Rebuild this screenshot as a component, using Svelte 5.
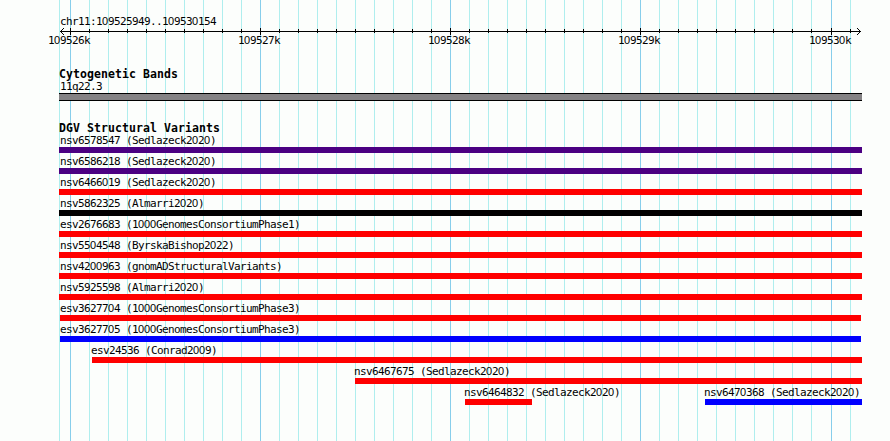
<script>
  const gridX = [59];
  for (let i = 0; i < 42; i++) gridX.push(70 + i * 19 + (i >= 40 ? 1 : 0));
  const majors = [70, 260, 450, 640, 831];
  const ticks = gridX.slice(1);

  const scale = [
    { x: 48, text: '109526k' },
    { x: 238, text: '109527k' },
    { x: 428, text: '109528k' },
    { x: 618, text: '109529k' },
    { x: 809, text: '109530k' }
  ];

  const purple = '#4b0082';
  const red = '#ff0000';
  const blue = '#0000ff';
  const full = (name, color, start = 59, end = 862) => [{ name, color, start, end, label: 60 }];

  const rows = [
    full('nsv6578547 (Sedlazeck2020)', purple),
    full('nsv6586218 (Sedlazeck2020)', purple),
    full('nsv6466019 (Sedlazeck2020)', red),
    full('nsv5862325 (Almarri2020)', '#000000'),
    full('esv2676683 (1000GenomesConsortiumPhase1)', red),
    full('nsv5504548 (ByrskaBishop2022)', red),
    full('nsv4200963 (gnomADStructuralVariants)', red),
    full('nsv5925598 (Almarri2020)', red),
    full('esv3627704 (1000GenomesConsortiumPhase3)', red, 60, 861),
    full('esv3627705 (1000GenomesConsortiumPhase3)', blue, 60, 861),
    [{ name: 'esv24536 (Conrad2009)', color: red, start: 92, end: 862, label: 91 }],
    [{ name: 'nsv6467675 (Sedlazeck2020)', color: red, start: 355, end: 862, label: 354 }],
    [
      { name: 'nsv6464832 (Sedlazeck2020)', color: red, start: 465, end: 532, label: 464 },
      { name: 'nsv6470368 (Sedlazeck2020)', color: blue, start: 705, end: 862, label: 704 }
    ]
  ];

  const gap = (row, i) => row[i].start - (i ? row[i - 1].end : 0);
  // Zeros are set apart so they can use an undotted face.
  const parts = (s) => s.split(/(0+)/).filter(Boolean);
</script>

{#snippet mono(s)}{#each parts(s) as p}{#if p[0] === '0'}<span class="zero">{p}</span>{:else}{p}{/if}{/each}{/snippet}

<main>
  <svg class="grid" width="890" height="441" shape-rendering="crispEdges">
    {#each gridX as x}
      <rect {x} y="0" width="1" height="441" fill={majors.includes(x) ? '#87ceeb' : '#afeeee'} />
    {/each}
  </svg>

  <div class="content">
    <header>{@render mono('chr11:109525949..109530154')}</header>
    <svg class="axis" width="890" height="40" shape-rendering="crispEdges">
      <rect x="60" y="4" width="801" height="1" />
      {#each ticks as x}
        {#if majors.includes(x)}
          <rect {x} y="1" width="1" height="7" />
        {:else}
          <rect {x} y="2" width="1" height="4" />
        {/if}
      {/each}
      <path d="M61 3h1v1h-1zM62 2h1v1h-1zM63 1h1v1h-1zM61 5h1v1h-1zM62 6h1v1h-1zM63 7h1v1h-1z" />
      <path d="M859 3h1v1h-1zM858 2h1v1h-1zM857 1h1v1h-1zM859 5h1v1h-1zM858 6h1v1h-1zM857 7h1v1h-1z" />
      {#each scale as s}
        <text x={s.x} y="17">{#each parts(s.text) as p}<tspan class:zero={p[0] === '0'}>{p}</tspan>{/each}</text>
      {/each}
    </svg>

    <h2>Cytogenetic Bands</h2>
    <div class="bandname">11q22.3</div>
    <div class="band"></div>

    <h2 class="variants">DGV Structural Variants</h2>
    {#each rows as row}
      <div class="row">
        {#each row as f, i}
          <div class="feature" style="margin-left: {gap(row, i)}px; width: {f.end - f.start}px">
            <div class="label" style="margin-left: {f.label - f.start}px">{@render mono(f.name)}</div>
            <div class="bar" style="background: {f.color}"></div>
          </div>
        {/each}
      </div>
    {/each}
  </div>
</main>

<style>
  :global(body) {
    background: #fcfefc;
  }
  main {
    position: relative;
    width: 890px;
    height: 441px;
    overflow: hidden;
    background: #fcfefc;
    color: #000;
    font-family: 'DejaVu Sans Mono', monospace;
    font-size: 11px;
    letter-spacing: -0.622px;
    white-space: nowrap;
  }
  .zero {
    font-family: 'Liberation Sans', sans-serif;
    letter-spacing: -0.117px;
  }
  svg {
    display: block;
  }
  .grid {
    position: absolute;
    inset: 0;
  }
  .content {
    position: relative;
    display: flex;
    flex-direction: column;
  }
  header {
    height: 12px;
    line-height: 13px;
    padding: 15px 0 0 60px;
  }
  h2 {
    margin: 0 0 0 59px;
    height: 13px;
    font-size: 11.5px;
    line-height: 15px;
    letter-spacing: 0.077px;
  }
  .bandname {
    height: 13px;
    margin-left: 60px;
    line-height: 13px;
  }
  .band {
    box-sizing: border-box;
    width: 803px;
    height: 8px;
    margin-left: 59px;
    border: solid #000;
    border-width: 1px 0;
    background: #848284;
  }
  .variants {
    margin-top: 20px;
    height: 12px;
  }
  .row {
    display: flex;
    height: 21px;
  }
  .feature {
    flex: none;
  }
  .label {
    height: 14px;
    line-height: 14px;
  }
  .bar {
    height: 6px;
  }
</style>
